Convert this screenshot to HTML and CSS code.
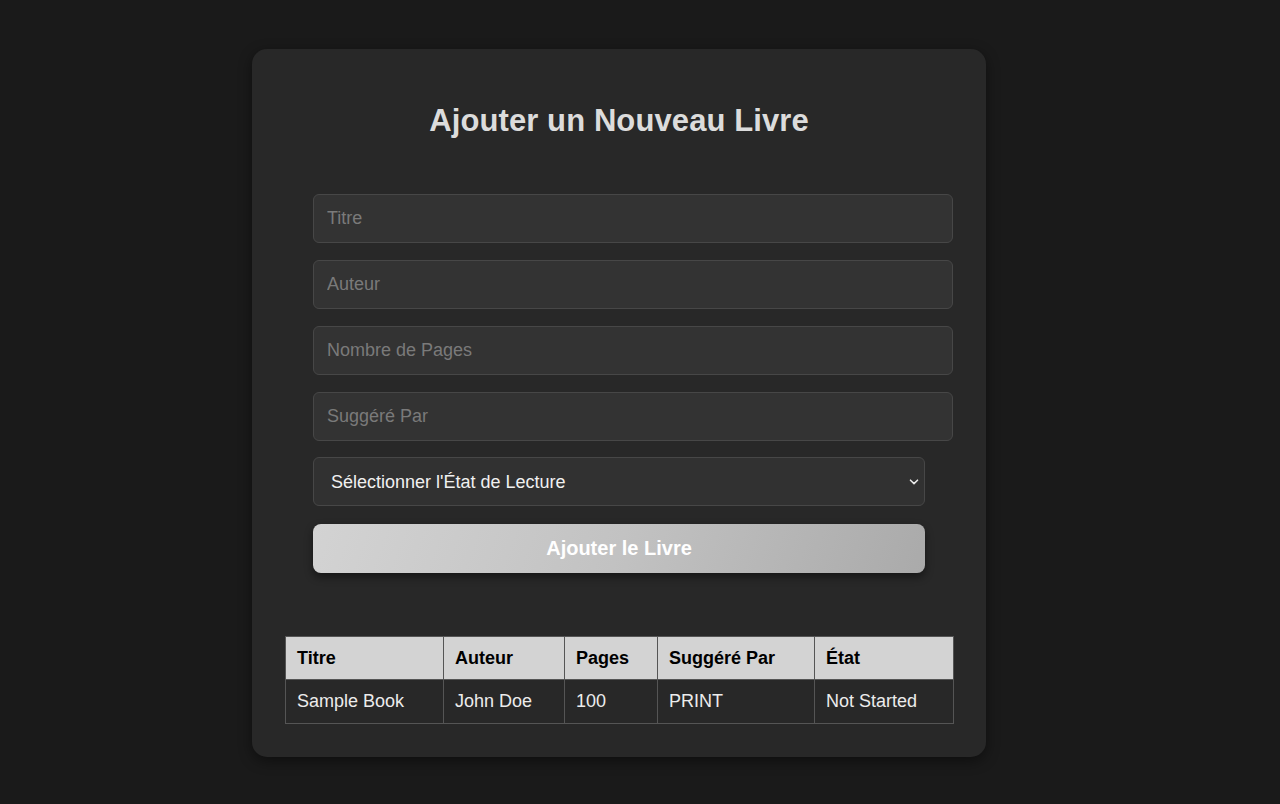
FILE: index.html
```html
<!DOCTYPE html>
<html lang="fr">
<head>
<meta charset="utf-8">
<title>Ajouter un Nouveau Livre</title>
<link rel="stylesheet" href="styles.css">
</head>
<body>
<main class="card">
  <h2 class="title">Ajouter un Nouveau Livre</h2>
  <form class="form">
    <input class="field" type="text" placeholder="Titre">
    <input class="field" type="text" placeholder="Auteur">
    <input class="field" type="number" placeholder="Nombre de Pages">
    <input class="field" type="text" placeholder="Suggéré Par">
    <div class="select-wrap">
      <select class="select">
        <option>Sélectionner l'État de Lecture</option>
        <option>Not Started</option>
        <option>In Progress</option>
        <option>Finished</option>
      </select>
      <svg class="chevron" width="10" height="8" viewBox="0 0 10 8"><path d="M1.5 2.2 L5 5.6 L8.5 2.2" fill="none" stroke="#e8e8e8" stroke-width="1.6" stroke-linecap="round" stroke-linejoin="round"/></svg>
    </div>
    <button class="submit" type="button">Ajouter le Livre</button>
  </form>
  <table class="books">
    <thead>
      <tr>
        <th class="c1">Titre</th>
        <th class="c2">Auteur</th>
        <th class="c3">Pages</th>
        <th class="c4">Suggéré Par</th>
        <th class="c5">État</th>
      </tr>
    </thead>
    <tbody>
      <tr>
        <td>Sample Book</td>
        <td>John Doe</td>
        <td>100</td>
        <td>PRINT</td>
        <td>Not Started</td>
      </tr>
    </tbody>
  </table>
</main>
</body>
</html>
```

FILE: styles.css
```css
* { box-sizing: border-box; }

html, body {
  margin: 0;
  padding: 0;
  background: #1a1a1a;
  font-family: "Liberation Sans", Arial, sans-serif;
  color: #e6e6e6;
}

body {
  display: flex;
  justify-content: flex-start;
  align-items: flex-start;
  min-height: 804px;
  padding-left: 252px;
}

.card {
  width: 734px;
  margin-top: 49px;
  padding: 32px 33px 33px;
  background: #282828;
  border-radius: 15px;
  box-shadow: 0 4px 14px rgba(0, 0, 0, 0.45);
  display: flex;
  flex-direction: column;
}

.title {
  margin: 22px 0 0;
  font-size: 31px;
  line-height: 36px;
  font-weight: bold;
  text-align: center;
  color: #dcdcdc;
  letter-spacing: 0.1px;
}

.form {
  margin: 55px 28px 0;
  display: flex;
  flex-direction: column;
}

.field {
  width: 640px;
  height: 49px;
  margin-bottom: 17px;
  padding: 0 13px;
  background: #333333;
  border: 1px solid #474747;
  border-radius: 6px;
  font-family: "Liberation Sans", Arial, sans-serif;
  font-size: 18px;
  color: #e6e6e6;
  outline: none;
  -moz-appearance: textfield;
}

.field::-webkit-outer-spin-button,
.field::-webkit-inner-spin-button {
  -webkit-appearance: none;
  margin: 0;
}

.field::placeholder { color: #7a7a7a; }

.select-wrap {
  position: relative;
  height: 49px;
  margin-top: -1px;
}

.select {
  width: 100%;
  height: 49px;
  padding: 0 30px 0 17px;
  -webkit-appearance: none;
  appearance: none;
  background: #313131;
  border: 1px solid #474747;
  border-radius: 6px;
  font-family: "Liberation Sans", Arial, sans-serif;
  font-size: 18px;
  color: #f0f0f0;
  outline: none;
}

.chevron {
  position: absolute;
  right: 6px;
  top: 21px;
  pointer-events: none;
}

.submit {
  margin-top: 18px;
  height: 49px;
  border: none;
  border-radius: 8px;
  background: linear-gradient(110deg, #d3d3d3 0%, #c2c2c2 50%, #aaaaaa 100%);
  box-shadow: 0 4px 8px rgba(0, 0, 0, 0.45);
  font-family: "Liberation Sans", Arial, sans-serif;
  font-size: 20px;
  font-weight: bold;
  color: #ffffff;
  cursor: pointer;
}

.books {
  margin-top: 63px;
  width: 668px;
  border-collapse: collapse;
  table-layout: fixed;
  font-size: 18px;
}

.books th,
.books td {
  border: 1px solid #555555;
  padding: 0 11px;
  text-align: left;
  line-height: 21px;
}

.books th {
  height: 43px;
  background: #d3d3d3;
  color: #000000;
  font-weight: bold;
}

.books td {
  height: 44px;
  background: #282828;
  color: #ececec;
}

.c1 { width: 158px; }
.c2 { width: 121px; }
.c3 { width: 93px; }
.c4 { width: 157px; }
.c5 { width: 139px; }
```
